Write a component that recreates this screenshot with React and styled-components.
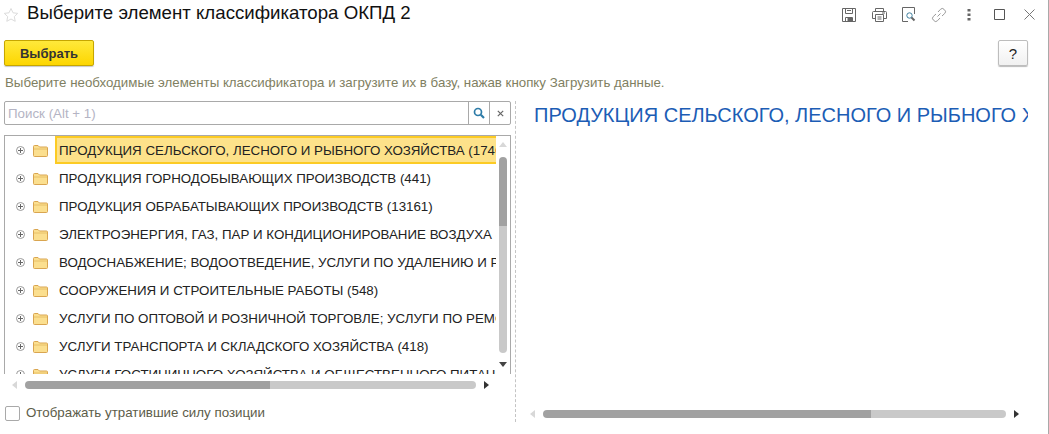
import React from 'react'
import styled, { createGlobalStyle } from 'styled-components'

const GlobalStyle = createGlobalStyle`
  html, body { margin: 0; padding: 0; background: #fff; }
  body { font-family: "Liberation Sans", Arial, sans-serif; }
`

const Page = styled.div`
  width: 1049px;
  height: 434px;
  box-sizing: border-box;
  border-right: 1px solid #a9a9a9;
  overflow: hidden;
  background: #fff;
`

const Header = styled.header`
  height: 26px;
  display: flex;
  align-items: center;
  padding: 0 4px 0 3px;
`

const StarSlot = styled.span`
  display: flex;
  margin-top: 3px;
`

const Title = styled.h1`
  flex: 1;
  margin: 0 0 0 8px;
  font-size: 18.67px;
  font-weight: 400;
  color: #111;
  white-space: nowrap;
`

const HeaderTools = styled.div`
  display: flex;
  align-items: center;
  margin-top: 3px;
`

const ToolIcon = styled.span`
  width: 30px;
  height: 20px;
  display: flex;
  align-items: center;
  justify-content: center;
`

const Toolbar = styled.div`
  margin-top: 14px;
  padding: 0 20px 0 4px;
  display: flex;
  justify-content: space-between;
`

const Button = styled.button`
  height: 26px;
  width: ${p => p.$width}px;
  padding: 0;
  box-sizing: border-box;
  border-radius: 2px;
  font-family: inherit;
  color: #333;
  ${p => p.$primary ? `
    border: 1px solid #c6a600;
    background: linear-gradient(#ffe93b, #fdd600);
    box-shadow: 0 1px 1px #c9c9c9;
    font-size: 13px;
    font-weight: 700;
  ` : `
    border: 1px solid #bdbdbd;
    background: linear-gradient(#fff, #f1f1f1);
    box-shadow: 0 1px 1px #bbb;
    font-size: 15px;
    color: #222;
  `}
`

const Hint = styled.p`
  margin: 10px 0 0 5px;
  height: 14px;
  line-height: 14px;
  font-size: 13.3px;
  color: #7f7f62;
  white-space: nowrap;
`

const Main = styled.div`
  margin-top: 11px;
  display: flex;
  align-items: flex-start;
`

const LeftPanel = styled.section`
  width: 507px;
  margin-left: 4px;
`

const SearchBox = styled.div`
  height: 24px;
  box-sizing: border-box;
  border: 1px solid #a9a9a9;
  border-radius: 2px;
  display: flex;
`

const SearchInput = styled.div`
  flex: 1;
  padding-left: 3px;
  font-size: 13.33px;
  line-height: 23px;
  color: #b4b4c4;
`

const SearchButton = styled.span`
  width: 20px;
  border-left: 1px solid #a9a9a9;
  display: flex;
  align-items: center;
  justify-content: center;
`

const Tree = styled.div`
  margin-top: 10px;
  height: 239px;
  box-sizing: border-box;
  border: solid #a9a9a9;
  border-width: 1px 1px 0;
  display: flex;
  overflow: hidden;
`

const TreeRows = styled.ul`
  list-style: none;
  margin: 0;
  padding: 0;
  width: 491px;
  flex: none;
  overflow: hidden;
`

const TreeRow = styled.li`
  height: 28px;
  display: flex;
  align-items: center;
  padding-left: 11px;
  white-space: nowrap;
`

const RowLabel = styled.span`
  flex: 1;
  min-width: 0;
  height: 28px;
  box-sizing: border-box;
  margin-left: 7px;
  padding-left: 4px;
  line-height: 30px;
  font-size: 13.33px;
  color: #222;
  overflow: hidden;
  ${p => p.$selected && `
    background: #fde28a;
    border: solid #fccb24;
    border-width: 2px 0 2px 2px;
    padding-left: 2px;
    line-height: 26px;
  `}
`

const VerticalBar = styled.div`
  width: 14px;
  flex: none;
  display: flex;
  flex-direction: column;
  align-items: center;
`

const VerticalTrack = styled.div`
  width: 8px;
  height: 196px;
  margin-top: 10px;
  border-radius: 4px;
  background: linear-gradient(#a1a1a1 0 69px, #c9c9c9 69px);
`

const VerticalArrow = styled.span`
  width: 0;
  height: 0;
  border-left: 4px solid transparent;
  border-right: 4px solid transparent;
  ${p => p.$down
    ? 'margin-top: 9px; border-top: 5px solid #444;'
    : 'margin-top: 6px; border-bottom: 5px solid #d8d8d8;'}
`

const HorizontalBar = styled.div`
  height: 8px;
  display: flex;
  align-items: center;
  gap: 8px;
`

const HorizontalTrack = styled.div`
  width: ${p => p.$width}px;
  height: 8px;
  border-radius: 4px;
  background: linear-gradient(90deg, #a1a1a1 ${p => p.$thumb}px, #c9c9c9 ${p => p.$thumb}px);
`

const HorizontalArrow = styled.span`
  width: 0;
  height: 0;
  border-top: 4px solid transparent;
  border-bottom: 4px solid transparent;
  ${p => p.$right ? 'border-left: 5px solid #333;' : 'border-right: 5px solid #d8d8d8;'}
`

const LeftScroll = styled.div`
  margin: 7px 0 0 8px;
`

const CheckRow = styled.label`
  margin: 17px 0 0 1px;
  display: flex;
  align-items: center;
  gap: 6px;
  font-size: 13.33px;
  color: #5d5d4a;
`

const CheckBox = styled.span`
  width: 15px;
  height: 15px;
  box-sizing: border-box;
  border: 1px solid #a9a9a9;
  border-radius: 2px;
`

const CheckText = styled.span`
  margin-top: -2px;
`

const Splitter = styled.div`
  width: 0;
  height: 321px;
  margin: 0 0 0 4px;
  border-left: 1px dashed #c4c4c4;
`

const RightPanel = styled.section`
  width: 494px;
  margin-left: 18px;
  display: flex;
  flex-direction: column;
`

const Heading = styled.h2`
  margin: 0;
  height: 30px;
  line-height: 29px;
  font-size: 20px;
  font-weight: 400;
  color: #1c5db5;
  white-space: nowrap;
  overflow: hidden;
`

const RightScroll = styled.div`
  margin: 279px -4px 0 -4px;
`

const ExpanderIcon = styled.svg`
  flex: none;
`

const FolderIcon = styled.svg`
  flex: none;
  margin-left: 8px;
`

const Star = () => (
  <svg width="16" height="16" viewBox="0 0 16 16" fill="none" stroke="#dcdcdc">
    <path d="M8 1.5l2 4.3 4.7.6-3.4 3.2.9 4.7L8 12l-4.2 2.3.9-4.7L1.300 6.400 6 5.800z" />
  </svg>
)

const SaveIcon = () => (
  <svg width="16" height="16" viewBox="0 0 16 16" fill="none" stroke="#666">
    <path d="M1.500 1.500h13v13h-13z" />
    <path d="M4.500 1.500v5h7v-5M6 3.500h4M4.500 14.500v-4h7v4" />
    <path d="M7 11h3.500v3.500H7z" fill="#666" />
  </svg>
)

const PrintIcon = () => (
  <svg width="17" height="16" viewBox="0 0 17 16" fill="none" stroke="#666">
    <path d="M4.500 4.500v-3h8v3M4 11.500H1.500v-6a1 1 0 0 1 1-1h12a1 1 0 0 1 1 1v6H13" />
    <path d="M4.500 7.500h8v7h-8zM6.500 10h4M6.500 12h4M11 6h3" />
  </svg>
)

const PreviewIcon = () => (
  <svg width="16" height="16" viewBox="0 0 16 16" fill="none" stroke="#666">
    <path d="M13.500 7V.5H1.500v14H7" />
    <circle cx="8.500" cy="8.500" r="2.700" stroke="#3f7f9f" />
    <path d="M10.500 10.500l3 3" strokeWidth="2" />
  </svg>
)

const LinkIcon = () => (
  <svg width="16" height="16" viewBox="0 0 16 16" fill="none" stroke="#9a9a9a">
    <path d="M6.500 9.500l3-3M7 5l2.500-2.700a2.400 2.400 0 0 1 3.500 0l.7.7a2.400 2.400 0 0 1 0 3.500L11 9M9 11l-2.500 2.700a2.400 2.400 0 0 1-3.500 0l-.7-.7a2.400 2.400 0 0 1 0-3.500L5 7" />
  </svg>
)

const DotsIcon = () => (
  <svg width="4" height="12" viewBox="0 0 4 12" fill="#666">
    <rect x="0.500" y="0" width="3" height="2.500" />
    <rect x="0.500" y="4.500" width="3" height="2.500" />
    <rect x="0.500" y="9" width="3" height="2.500" />
  </svg>
)

const MaximizeIcon = () => (
  <svg width="11" height="11" viewBox="0 0 11 11" fill="none" stroke="#555">
    <path d="M.5.500h10v10H.5z" />
  </svg>
)

const CloseIcon = () => (
  <svg width="11" height="11" viewBox="0 0 11 11" fill="none" stroke="#777">
    <path d="M.5.500l10 10M10.500.500l-10 10" />
  </svg>
)

const SearchIcon = () => (
  <svg width="12" height="12" viewBox="0 0 12 12" fill="none" stroke="#2e7ca8" strokeWidth="1.700">
    <circle cx="5" cy="5" r="3.500" />
    <path d="M7.800 7.800L11 11" strokeWidth="2.200" />
  </svg>
)

const ClearIcon = () => (
  <svg width="7" height="7" viewBox="0 0 7 7" fill="none" stroke="#666" strokeWidth="1.200">
    <path d="M.8.800l5.400 5.400M6.200.800L.8 6.200" />
  </svg>
)

const Expander = () => (
  <ExpanderIcon width="9" height="9" viewBox="0 0 9 9" fill="none" stroke="#999">
    <circle cx="4.500" cy="4.500" r="4" />
    <path d="M2 4.500h5M4.500 2v5" stroke="#666" />
  </ExpanderIcon>
)

const Folder = () => (
  <FolderIcon width="15" height="13" viewBox="0 0 15 13">
    <path d="M.5 2.500a1 1 0 0 1 1-1h3.500l1.500 1.500h7a1 1 0 0 1 1 1v7.500a1 1 0 0 1-1 1h-12a1 1 0 0 1-1-1z" fill="#fbdf8f" stroke="#d9a550" />
    <path d="M1 5h13" stroke="#e8c069" />
  </FolderIcon>
)

const rows = [
  'ПРОДУКЦИЯ СЕЛЬСКОГО, ЛЕСНОГО И РЫБНОГО ХОЗЯЙСТВА (1746)',
  'ПРОДУКЦИЯ ГОРНОДОБЫВАЮЩИХ ПРОИЗВОДСТВ (441)',
  'ПРОДУКЦИЯ ОБРАБАТЫВАЮЩИХ ПРОИЗВОДСТВ (13161)',
  'ЭЛЕКТРОЭНЕРГИЯ, ГАЗ, ПАР И КОНДИЦИОНИРОВАНИЕ ВОЗДУХА (126)',
  'ВОДОСНАБЖЕНИЕ; ВОДООТВЕДЕНИЕ, УСЛУГИ ПО УДАЛЕНИЮ И РЕКУЛЬТИВАЦИИ',
  'СООРУЖЕНИЯ И СТРОИТЕЛЬНЫЕ РАБОТЫ (548)',
  'УСЛУГИ ПО ОПТОВОЙ И РОЗНИЧНОЙ ТОРГОВЛЕ; УСЛУГИ ПО РЕМОНТУ',
  'УСЛУГИ ТРАНСПОРТА И СКЛАДСКОГО ХОЗЯЙСТВА (418)',
  'УСЛУГИ ГОСТИНИЧНОГО ХОЗЯЙСТВА И ОБЩЕСТВЕННОГО ПИТАНИЯ (49)',
]

export default function App() {
  return (
    <Page>
      <GlobalStyle />
      <Header>
        <StarSlot><Star /></StarSlot>
        <Title>Выберите элемент классификатора ОКПД 2</Title>
        <HeaderTools>
          <ToolIcon><SaveIcon /></ToolIcon>
          <ToolIcon><PrintIcon /></ToolIcon>
          <ToolIcon><PreviewIcon /></ToolIcon>
          <ToolIcon><LinkIcon /></ToolIcon>
          <ToolIcon><DotsIcon /></ToolIcon>
          <ToolIcon><MaximizeIcon /></ToolIcon>
          <ToolIcon><CloseIcon /></ToolIcon>
        </HeaderTools>
      </Header>
      <Toolbar>
        <Button $primary $width={90}>Выбрать</Button>
        <Button $width={30}>?</Button>
      </Toolbar>
      <Hint>Выберите необходимые элементы классификатора и загрузите их в базу, нажав кнопку Загрузить данные.</Hint>
      <Main>
        <LeftPanel>
          <SearchBox>
            <SearchInput>Поиск (Alt + 1)</SearchInput>
            <SearchButton><SearchIcon /></SearchButton>
            <SearchButton><ClearIcon /></SearchButton>
          </SearchBox>
          <Tree>
            <TreeRows>
              {rows.map((row, i) => (
                <TreeRow key={row}>
                  <Expander />
                  <Folder />
                  <RowLabel $selected={i === 0}>{row}</RowLabel>
                </TreeRow>
              ))}
            </TreeRows>
            <VerticalBar>
              <VerticalArrow />
              <VerticalTrack />
              <VerticalArrow $down />
            </VerticalBar>
          </Tree>
          <LeftScroll>
            <HorizontalBar>
              <HorizontalArrow />
              <HorizontalTrack $width={451} $thumb={245} />
              <HorizontalArrow $right />
            </HorizontalBar>
          </LeftScroll>
          <CheckRow>
            <CheckBox />
            <CheckText>Отображать утратившие силу позиции</CheckText>
          </CheckRow>
        </LeftPanel>
        <Splitter />
        <RightPanel>
          <Heading>ПРОДУКЦИЯ СЕЛЬСКОГО, ЛЕСНОГО И РЫБНОГО ХОЗЯЙСТВА</Heading>
          <RightScroll>
            <HorizontalBar>
              <HorizontalArrow />
              <HorizontalTrack $width={463} $thumb={328} />
              <HorizontalArrow $right />
            </HorizontalBar>
          </RightScroll>
        </RightPanel>
      </Main>
    </Page>
  )
}
